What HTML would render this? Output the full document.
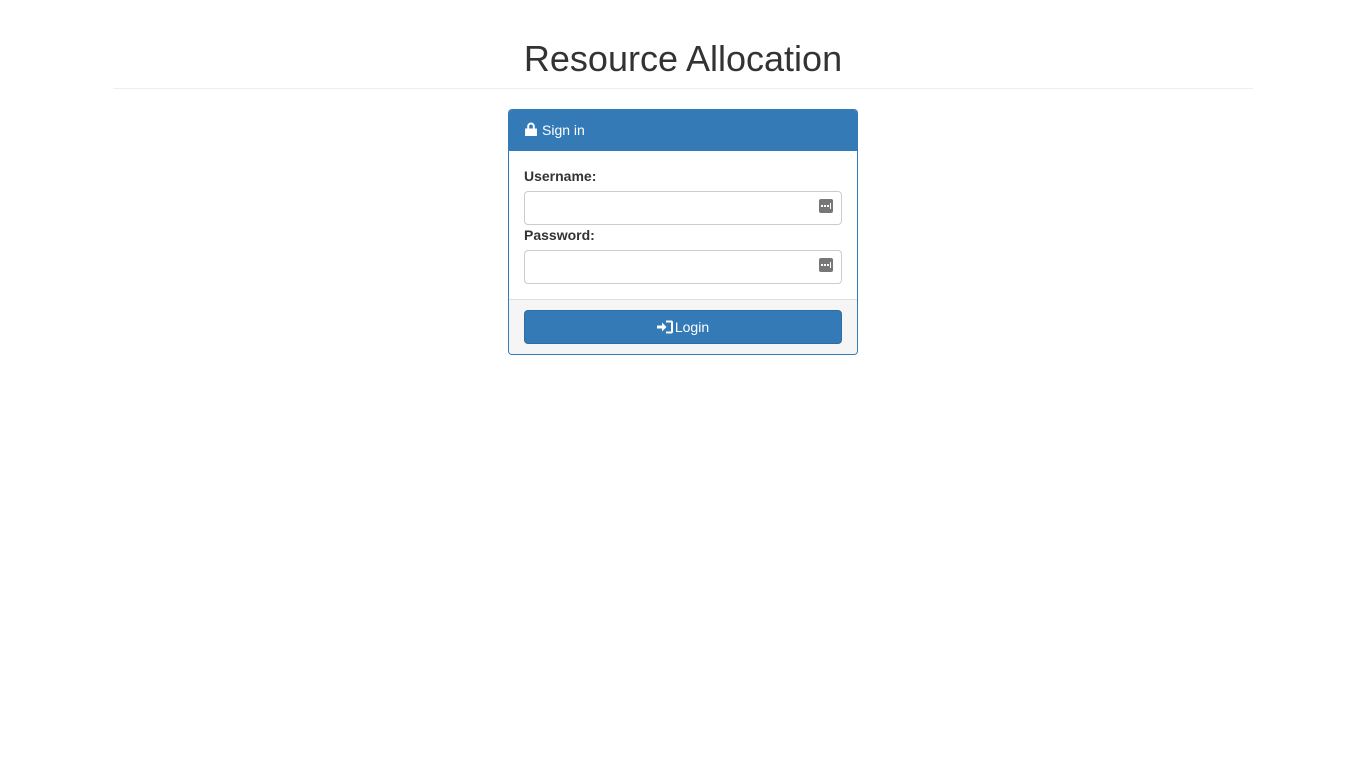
<!DOCTYPE html>
<html><head><style>
body{margin:0;background:#fff;font-family:"Liberation Sans",sans-serif;color:#333;font-size:14px}
h1{position:absolute;top:38px;left:0;width:1366px;text-align:center;margin:0;font-size:36px;font-weight:normal;line-height:42px}
.hr{position:absolute;top:88px;left:113px;width:1140px;height:1px;background:#eee}
.panel{position:absolute;left:508px;top:109px;width:348px;height:244px;border:1px solid #337ab7;border-radius:4px;overflow:hidden;background:#fff}
.head{background:#337ab7;color:#fff;height:41px;line-height:41px;padding-left:15px;font-size:14px}
label{position:absolute;left:15px;font-weight:bold;font-size:14px}
.inp{position:absolute;left:15px;width:316px;height:32px;border:1px solid #ccc;border-radius:4px}
.ic{position:absolute;right:8px;top:7px;width:14px;height:14px;background:#777;border-radius:2px}
.ic:after{content:"";position:absolute;left:2px;top:6px;width:8px;height:0;border-top:2px dotted #fff}
.ic:before{content:"";position:absolute;left:11px;top:4px;width:1px;height:6px;background:#fff}
.foot{position:absolute;left:0;top:189px;width:348px;height:55px;background:#f5f5f5;border-top:1px solid #ddd}
.btn{position:absolute;left:15px;top:10px;width:316px;height:32px;background:#337ab7;border:1px solid #2e6da4;border-radius:4px;color:#fff;text-align:center;line-height:32px;font-size:14px}
</style></head><body>
<h1>Resource Allocation</h1>
<div class="hr"></div>
<div class="panel">
<div class="head"><svg width="14" height="14" viewBox="0 0 13 13" style="vertical-align:-1px;margin-right:4px"><path d="M3 6V4a3.5 3.5 0 0 1 7 0v2h-1.8V4a1.7 1.7 0 0 0-3.4 0v2z M1 6h11v7H1z" fill="#fff"/></svg>Sign in</div>
<label style="top:58px">Username:</label>
<div class="inp" style="top:81px"><div class="ic"></div></div>
<label style="top:117px">Password:</label>
<div class="inp" style="top:140px"><div class="ic"></div></div>
<div class="foot"><div class="btn"><svg width="16" height="14" viewBox="0 0 16 13" style="vertical-align:-2px;margin-right:2px"><path d="M0 5h5V2l4.5 4.5L5 11V8H0z M9 0h5a2 2 0 0 1 2 2v9a2 2 0 0 1-2 2H9v-2h5V2H9z" fill="#fff"/></svg>Login</div></div>
</div>
</body></html>
